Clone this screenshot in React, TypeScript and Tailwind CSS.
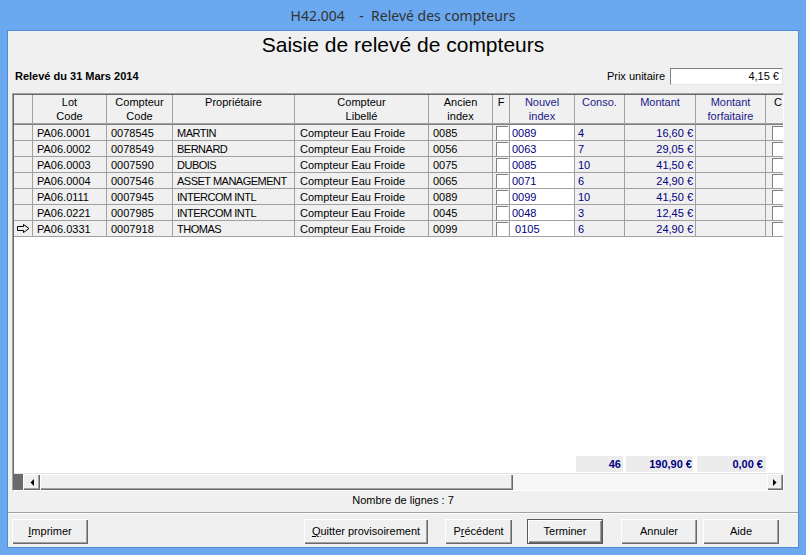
import React from 'react';

const W = ['w-[19px]', 'w-[74px]', 'w-[66px]', 'w-[122px]', 'w-[134px]', 'w-[64px]', 'w-[17px]', 'w-[65px]', 'w-[50px]', 'w-[71px]', 'w-[70px]', 'w-[17px]'];

const headers: { l: string[]; blue?: boolean; cls?: string }[] = [
  { l: [] },
  { l: ['Lot', 'Code'] },
  { l: ['Compteur', 'Code'] },
  { l: ['Propriétaire'] },
  { l: ['Compteur', 'Libellé'] },
  { l: ['Ancien', 'index'] },
  { l: ['F'] },
  { l: ['Nouvel', 'index'], blue: true },
  { l: ['Conso.'], blue: true },
  { l: ['Montant'], blue: true },
  { l: ['Montant', 'forfaitaire'], blue: true },
  { l: ['C'], cls: 'text-left pl-[8px]' },
];

const rows = [
  ['PA06.0001', '0078545', 'MARTIN', '0085', '0089', '4', '16,60 €'],
  ['PA06.0002', '0078549', 'BERNARD', '0056', '0063', '7', '29,05 €'],
  ['PA06.0003', '0007590', 'DUBOIS', '0075', '0085', '10', '41,50 €'],
  ['PA06.0004', '0007546', 'ASSET MANAGEMENT', '0065', '0071', '6', '24,90 €'],
  ['PA06.0111', '0007945', 'INTERCOM INTL', '0089', '0099', '10', '41,50 €'],
  ['PA06.0221', '0007985', 'INTERCOM INTL', '0045', '0048', '3', '12,45 €'],
  ['PA06.0331', '0007918', 'THOMAS', '0099', '\u00a00105', '6', '24,90 €'],
];

const cell = 'shrink-0 border-r border-[#a0a0a0] overflow-hidden whitespace-nowrap';

function Btn({ w, children, def }: { w: string; children: React.ReactNode; def?: boolean }) {
  return (
    <div
      className={`${w} h-[25px] shrink-0 flex items-center justify-center bg-[#f0f0f0] text-black text-[11px] ${
        def
          ? 'border border-[#5a5a5a] shadow-[inset_1px_1px_0_#fff,inset_-1px_-1px_0_#696969,inset_-2px_-2px_0_#a0a0a0]'
          : 'shadow-[inset_1px_1px_0_#fff,inset_-1px_-1px_0_#696969,inset_-2px_-2px_0_#a0a0a0]'
      }`}
    >
      <span>{children}</span>
    </div>
  );
}

function Check({ c }: { c: string }) {
  return <div className={`${c} mt-px h-[14px] bg-white border-t border-l border-[#808080]`} />;
}

export default function App() {
  return (
    <div className="w-[806px] h-[555px] bg-[#6aa8f0] pt-[30px] px-[7px] pb-[7px] font-['Liberation_Sans',Arial,sans-serif] overflow-hidden relative">
      <div className="absolute left-0 top-0 w-[806px] h-[30px] flex items-center justify-center pt-[1px] text-[14px] text-[#333] font-['Noto_Sans',sans-serif] whitespace-pre">
        H42.004    -  Relevé des compteurs
      </div>
      <div className="border border-[#4f8bd6] w-[792px] h-[518px]">
        <div className="w-[790px] h-[516px] bg-[#f0f0f0] flex flex-col">
          <div className="h-[28px] leading-[28px] text-center text-[21px] text-black">Saisie de relevé de compteurs</div>

          <div className="mt-[9px] h-[17px] flex items-center">
            <div className="ml-[7px] text-[11px] font-bold text-black">Relevé du 31 Mars 2014</div>
            <div className="ml-auto text-[11px] text-black mr-[5px]">Prix unitaire</div>
            <div className="mr-[15px] w-[113px] h-[17px] bg-white border-t border-l border-[#808080] border-r border-b border-r-[#e3e3e3] border-b-[#e3e3e3] text-[11px] text-black text-right pr-[3px] leading-[15px]">
              4,15 €
            </div>
          </div>

          <div className="mt-[8px] ml-[4px] w-[772px] h-[398px] border-t border-l border-[#a0a0a0] border-r border-b border-r-[#ffffff] border-b-[#ffffff] shrink-0">
            <div className="border-t border-l border-[#696969] h-[396px] flex flex-col text-[11px]">
              {/* header */}
              <div className="flex h-[28px] bg-[#f0f0f0] shrink-0">
                {headers.map((h, i) => (
                  <div
                    key={i}
                    className={`${W[i]} shrink-0 ${i < 11 ? 'border-r border-[#a0a0a0]' : ''} ${h.cls ?? 'text-center'} leading-[14px] ${
                      h.blue ? 'text-[#1a1a8a]' : 'text-black'
                    }`}
                  >
                    {h.l.map((t, j) => (
                      <div key={j}>{t}</div>
                    ))}
                  </div>
                ))}
              </div>
              <div className="h-px bg-[#a0a0a0] shrink-0" />
              <div className="h-px bg-[#808080] shrink-0" />

              {/* rows */}
              <div className="flex flex-col bg-white flex-1">
                {rows.map((r, i) => (
                  <div key={i} className="flex h-[16px] border-b border-[#a0a0a0] bg-[#f0f0f0] leading-[16px] shrink-0">
                    <div className={`${W[0]} ${cell} flex items-center pl-[3px]`}>
                      {i === 6 && (
                        <svg width="13" height="9" viewBox="0 0 13 9">
                          <path d="M0.5 2.5H6.5V0.5L12 4.5L6.5 8.5V6.5H0.5Z" fill="none" stroke="#000" strokeWidth="1" />
                        </svg>
                      )}
                    </div>
                    <div className={`${W[1]} ${cell} pl-[4px] text-black`}>{r[0]}</div>
                    <div className={`${W[2]} ${cell} pl-[4px] text-black`}>{r[1]}</div>
                    <div className={`${W[3]} ${cell} pl-[4px] text-black tracking-[-0.5px]`}>{r[2]}</div>
                    <div className={`${W[4]} ${cell} pl-[5px] text-black`}>Compteur Eau Froide</div>
                    <div className={`${W[5]} ${cell} pl-[4px] text-black`}>{r[3]}</div>
                    <div className={`${W[6]} ${cell}`}>
                      <Check c="ml-[3px] w-[12px]" />
                    </div>
                    <div className={`${W[7]} ${cell} pl-[2px] bg-white text-[#000080]`}>{r[4]}</div>
                    <div className={`${W[8]} ${cell} pl-[3px] text-[#000080]`}>{r[5]}</div>
                    <div className={`${W[9]} ${cell} pr-[2px] text-right text-[#000080]`}>{r[6]}</div>
                    <div className={`${W[10]} ${cell}`} />
                    <div className={`${W[11]} shrink-0 overflow-hidden`}>
                      <Check c="ml-[6px] w-[11px]" />
                    </div>
                  </div>
                ))}
                <div className="flex-1" />
                {/* totals */}
                <div className="flex h-[16px] leading-[16px] font-bold text-[#000080] shrink-0">
                  <div className="w-[561px] shrink-0" />
                  <div className="ml-px w-[47px] shrink-0 bg-[#ececec] text-right pr-[2px]">46</div>
                  <div className="ml-[3px] w-[67px] shrink-0 bg-[#ececec] text-right pr-[1px]">190,90 €</div>
                  <div className="ml-[4px] w-[69px] shrink-0 bg-[#ececec] text-right pr-[3px]">0,00 €</div>
                </div>
                <div className="h-[2px] shrink-0 border-b border-[#e3e3e3]" />
                {/* scrollbar */}
                <div className="flex h-[16px] shrink-0 bg-[#f0f0f0]">
                  <div className="w-[9px] bg-[#6b6b6b] shrink-0" />
                  <div className="w-[17px] shrink-0 flex items-center justify-center shadow-[inset_1px_1px_0_#fff,inset_-1px_-1px_0_#696969,inset_-2px_-2px_0_#a0a0a0]">
                    <svg width="4" height="7" viewBox="0 0 4 7">
                      <path d="M4 0V7L0.5 3.5Z" fill="#000" />
                    </svg>
                  </div>
                  <div className="w-[473px] shrink-0 shadow-[inset_1px_1px_0_#fff,inset_-1px_-1px_0_#696969,inset_-2px_-2px_0_#a0a0a0]" />
                  <div className="w-[254px] shrink-0 bg-[repeating-conic-gradient(#f0f0f0_0_25%,#fcfcfc_0_50%)] bg-[length:2px_2px]" />
                  <div className="w-[16px] shrink-0 flex items-center justify-center shadow-[inset_1px_1px_0_#fff,inset_-1px_-1px_0_#696969,inset_-2px_-2px_0_#a0a0a0]">
                    <svg width="4" height="7" viewBox="0 0 4 7">
                      <path d="M0 0V7L3.5 3.5Z" fill="#000" />
                    </svg>
                  </div>
                </div>
              </div>
            </div>
          </div>

          <div className="h-[18px] leading-[18px] text-center text-[11px] text-black">Nombre de lignes : 7</div>
          <div className="mt-[3px] h-px bg-[#a0a0a0]" />
          <div className="h-px bg-white" />

          <div className="mt-[5px] flex">
            <div className="ml-[4px]">
              <Btn w="w-[76px]">
                <span className="underline">I</span>mprimer
              </Btn>
            </div>
            <div className="ml-[216px]">
              <Btn w="w-[124px]">
                <span className="underline">Q</span>uitter provisoirement
              </Btn>
            </div>
            <div className="ml-[17px]">
              <Btn w="w-[67px]">
                P<span className="underline">r</span>écédent
              </Btn>
            </div>
            <div className="ml-[15px]">
              <Btn w="w-[76px]" def>
                Terminer
              </Btn>
            </div>
            <div className="ml-[18px]">
              <Btn w="w-[76px]">Annuler</Btn>
            </div>
            <div className="ml-[6px]">
              <Btn w="w-[76px]">Aide</Btn>
            </div>
          </div>
        </div>
      </div>
    </div>
  );
}
